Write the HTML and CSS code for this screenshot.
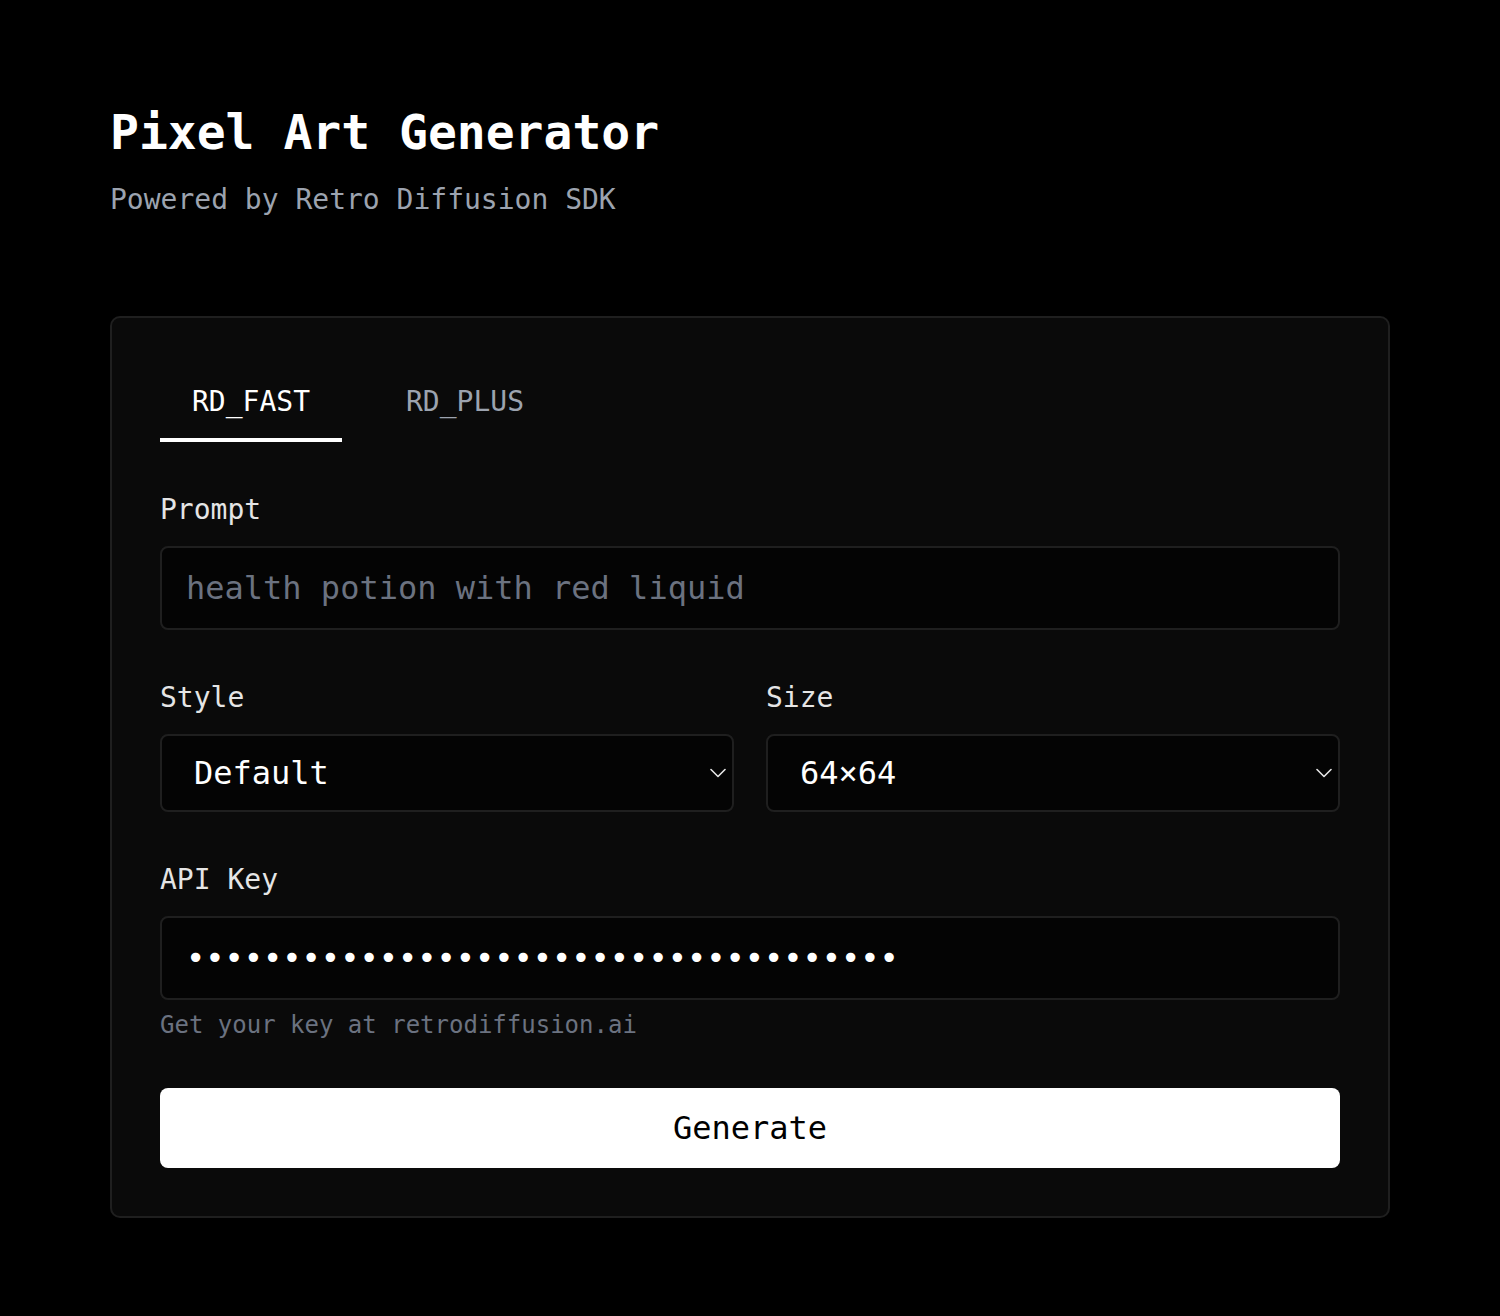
FILE: index.html
```html
<!DOCTYPE html>
<html lang="en">
<head>
<meta charset="utf-8">
<title>Pixel Art Generator</title>
<link rel="stylesheet" href="styles.css">
</head>
<body>
<main class="page">
  <header class="header">
    <h1 class="title">Pixel Art Generator</h1>
    <p class="subtitle">Powered by Retro Diffusion SDK</p>
  </header>

  <section class="card">
    <nav class="tabs">
      <button class="tab tab-active" type="button">RD_FAST</button>
      <button class="tab" type="button">RD_PLUS</button>
    </nav>

    <div class="field field-first">
      <label class="label" for="prompt">Prompt</label>
      <input class="input" id="prompt" type="text" placeholder="health potion with red liquid">
    </div>

    <div class="row">
      <div class="field">
        <label class="label" for="style">Style</label>
        <div class="select-wrap">
          <select class="select" id="style">
            <option>Default</option>
          </select>
          <svg class="chevron" width="16" height="10" viewBox="0 0 16 10" aria-hidden="true"><path d="M1 1.5 L8 8.5 L15 1.5" fill="none" stroke="#e5e5e5" stroke-width="1.6" stroke-linecap="round" stroke-linejoin="round"/></svg>
        </div>
      </div>
      <div class="field">
        <label class="label" for="size">Size</label>
        <div class="select-wrap">
          <select class="select" id="size">
            <option>64×64</option>
          </select>
          <svg class="chevron" width="16" height="10" viewBox="0 0 16 10" aria-hidden="true"><path d="M1 1.5 L8 8.5 L15 1.5" fill="none" stroke="#e5e5e5" stroke-width="1.6" stroke-linecap="round" stroke-linejoin="round"/></svg>
        </div>
      </div>
    </div>

    <div class="field">
      <label class="label" for="key">API Key</label>
      <input class="input" id="key" type="password" value="rd_0123456789abcdefghijklmnopqrstuvwx">
      <p class="hint">Get your key at retrodiffusion.ai</p>
    </div>

    <button class="generate" type="button">Generate</button>
  </section>
</main>
</body>
</html>
```

FILE: styles.css
```css
* {
  box-sizing: border-box;
}

html, body {
  margin: 0;
  padding: 0;
  background: #000;
}

body {
  font-family: "DejaVu Sans Mono", "Liberation Mono", monospace;
  color: #e5e5e5;
}

.page {
  max-width: 1280px;
  margin: 0 auto;
  padding: 104px 0 98px;
}

.header {
  margin-bottom: 100px;
}

.title {
  margin: 0;
  font-size: 48px;
  line-height: 57.6px;
  font-weight: 700;
  color: #fff;
}

.subtitle {
  margin: 21px 0 0;
  font-size: 28px;
  line-height: 33.6px;
  color: #9ca3af;
}

.card {
  background: #0a0a0a;
  border: 2px solid #1f1f1f;
  border-radius: 10px;
  padding: 48px;
  display: flex;
  flex-direction: column;
}

.tabs {
  display: flex;
  gap: 32px;
}

.tab {
  font-family: inherit;
  font-size: 28px;
  line-height: 34px;
  padding: 19px 32px 19px;
  background: none;
  border: 0;
  border-bottom: 4px solid transparent;
  color: #9ca3af;
  cursor: pointer;
}

.tab-active {
  color: #fff;
  border-bottom-color: #fff;
}

.field {
  display: flex;
  flex-direction: column;
  margin-top: 51px;
  min-width: 0;
}

.field-first {
  margin-top: 51px;
}

.row {
  display: grid;
  grid-template-columns: 1fr 1fr;
  gap: 32px;
}

.label {
  font-size: 28px;
  line-height: 34px;
  color: #e5e5e5;
  margin-bottom: 19px;
}

.input {
  font-family: inherit;
  font-size: 32px;
  line-height: 36px;
  height: 84px;
  padding: 0 24px;
  background: #040404;
  border: 2px solid #1f1f1f;
  border-radius: 8px;
  color: #fff;
  outline: none;
  width: 100%;
}

.input::placeholder {
  color: #6b7280;
}

.select-wrap {
  position: relative;
}

.select {
  appearance: none;
  -webkit-appearance: none;
  font-family: inherit;
  font-size: 32px;
  line-height: 36px;
  height: 78px;
  width: 100%;
  padding: 0 32px;
  background: #040404;
  border: 2px solid #1f1f1f;
  border-radius: 8px;
  color: #fff;
  outline: none;
}

.chevron {
  position: absolute;
  right: 8px;
  top: 34px;
  pointer-events: none;
}

.hint {
  margin: 11px 0 0;
  font-size: 24px;
  line-height: 28px;
  color: #6b7280;
}

.generate {
  margin-top: 49px;
  height: 80px;
  font-family: inherit;
  font-size: 32px;
  line-height: 36px;
  background: #fff;
  color: #000;
  border: 0;
  border-radius: 8px;
  cursor: pointer;
}
```
